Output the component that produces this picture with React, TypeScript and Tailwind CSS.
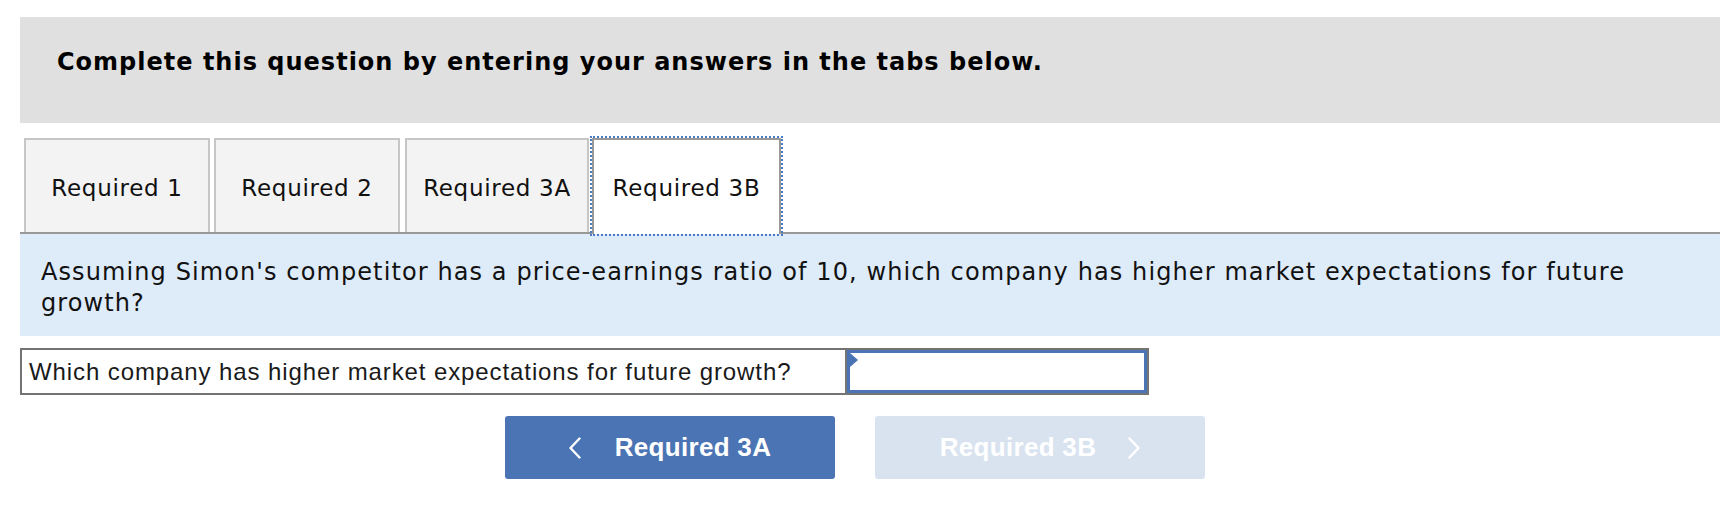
const tabs = [
  { label: "Required 1", cls: "w-[186px] mr-[4px]" },
  { label: "Required 2", cls: "w-[186px] mr-[5px]" },
  { label: "Required 3A", cls: "w-[184px] mr-[3px]" },
];

function Chevron({ dir }: { dir: "left" | "right" }) {
  return (
    <svg width="12" height="22" viewBox="0 0 12 22" fill="none" stroke="currentColor" strokeWidth="2.4" strokeLinecap="round" strokeLinejoin="round">
      {dir === "left" ? <polyline points="10.5,1.5 1.5,11 10.5,20.5" /> : <polyline points="1.5,1.5 10.5,11 1.5,20.5" />}
    </svg>
  );
}

export default function App() {
  return (
    <div className="w-[1720px] h-[526px] bg-white pt-[17px] pl-[20px] font-['DejaVu_Sans',Verdana,sans-serif] text-black">
      {/* instructions */}
      <div className="h-[106px] bg-[#e0e0e0] pl-[37px] pt-[29px]">
        <h2 className="text-[24px] leading-[32px] tracking-[1px] font-bold">
          Complete this question by entering your answers in the tabs below.
        </h2>
      </div>

      {/* tab strip */}
      <div className="mt-[15px] flex items-end border-b-2 border-[#999999] pl-[4px]">
        {tabs.map((t) => (
          <div
            key={t.label}
            className={`${t.cls} h-[94px] pt-[4px] bg-[#f3f3f3] border-2 border-b-0 border-[#c6c6c6] flex items-center justify-center text-[23px] tracking-[0.7px] text-[#111]`}
          >
            {t.label}
          </div>
        ))}
        <div className="w-[189px] h-[96px] -mb-[2px] pt-[2px] bg-white border-2 border-b-0 border-[#999999] outline-2 outline-dotted outline-[#4a7bc4] flex items-center justify-center text-[23px] tracking-[0.7px] text-[#111]">
          Required 3B
        </div>
      </div>

      {/* question prompt */}
      <div className="h-[102px] bg-[#deebf8] pl-[21px] pr-[60px] pt-[23px] text-[24px] leading-[31px] tracking-[1.1px] text-[#111]">
        Assuming Simon's competitor has a price-earnings ratio of 10, which company has higher market expectations for future growth?
      </div>

      {/* answer row */}
      <div className="mt-[12px] w-[1129px] h-[47px] flex border-2 border-[#737373] font-['Liberation_Sans',Arial,sans-serif]">
        <div className="w-[825px] flex items-center pl-[7px] text-[24px] tracking-[0.9px] text-[#1a1a1a] border-r-2 border-[#737373]">
          Which company has higher market expectations for future growth?
        </div>
        <div className="relative flex-1 border-[3px] border-[#4a74b4] bg-white">
          <span className="absolute left-0 top-0 w-0 h-0 border-y-[7px] border-y-transparent border-l-[8px] border-l-[#4a74b4]" />
        </div>
      </div>

      {/* navigation */}
      <div className="mt-[21px] ml-[485px] flex gap-[40px] font-['Liberation_Sans',Arial,sans-serif]">
        <button className="w-[330px] h-[63px] rounded-[3px] bg-[#4a74b4] text-white flex items-center justify-center gap-[34px] text-[26px] tracking-[0.3px] font-bold">
          <Chevron dir="left" />
          <span>Required 3A</span>
        </button>
        <button className="w-[330px] h-[63px] rounded-[3px] bg-[#d9e3f0] text-white flex items-center justify-center gap-[32px] text-[26px] tracking-[0.3px] font-bold">
          <span>Required 3B</span>
          <Chevron dir="right" />
        </button>
      </div>
    </div>
  );
}
